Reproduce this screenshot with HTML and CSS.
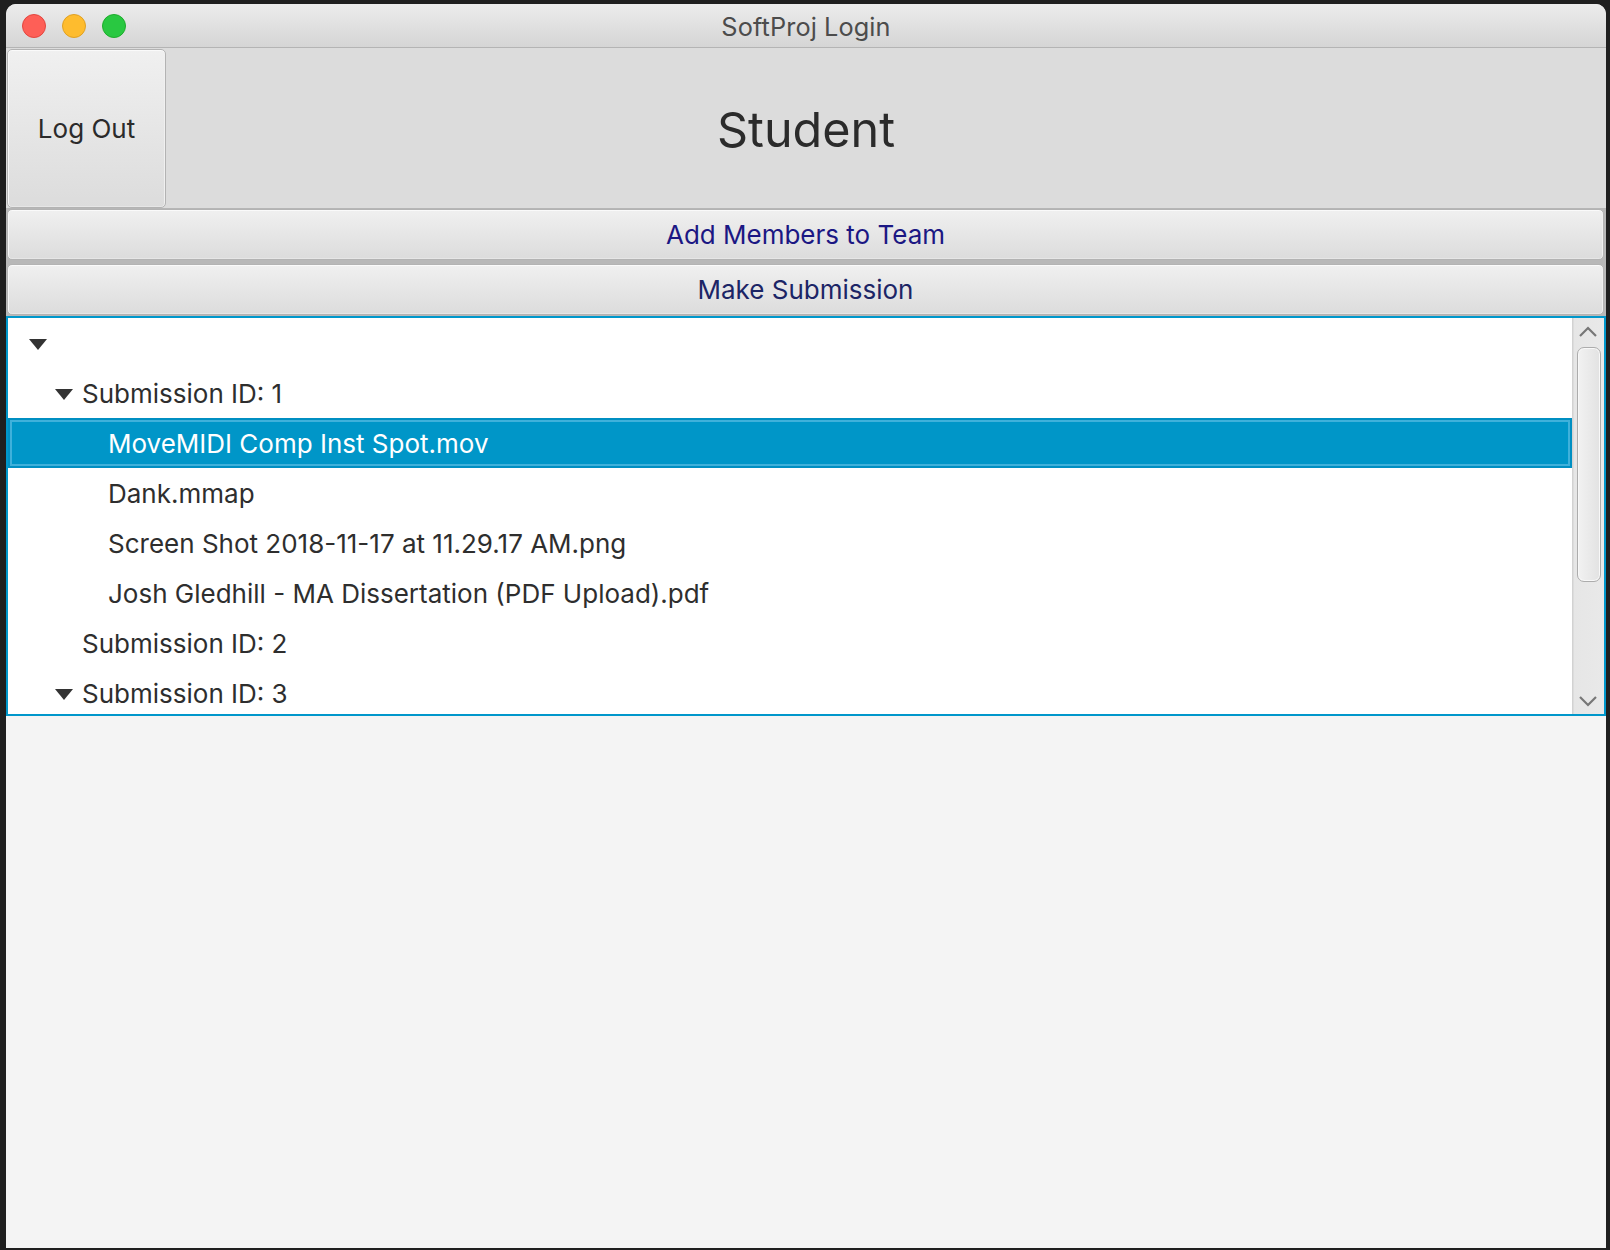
FILE: index.html
```html
<!DOCTYPE html>
<html>
<head>
<meta charset="utf-8">
<link rel="stylesheet" href="styles.css">
</head>
<body>
<div class="window">
  <div class="titlebar">
    <div class="lights">
      <span class="light red"></span>
      <span class="light yellow"></span>
      <span class="light green"></span>
    </div>
    <div class="title">SoftProj Login</div>
  </div>
  <div class="header">
    <button class="btn logout">Log Out</button>
    <div class="role">Student</div>
  </div>
  <div class="actions">
    <button class="btn wide add">Add Members to Team</button>
    <button class="btn wide submit">Make Submission</button>
  </div>
  <div class="tree">
    <div class="rows">
      <div class="row l0"><span class="arrow open"></span><span class="label"></span></div>
      <div class="row l1"><span class="arrow open"></span><span class="label">Submission ID: 1</span></div>
      <div class="row l2 selected"><span class="arrow"></span><span class="label">MoveMIDI Comp Inst Spot.mov</span></div>
      <div class="row l2"><span class="arrow"></span><span class="label">Dank.mmap</span></div>
      <div class="row l2"><span class="arrow"></span><span class="label">Screen Shot 2018-11-17 at 11.29.17 AM.png</span></div>
      <div class="row l2"><span class="arrow"></span><span class="label">Josh Gledhill - MA Dissertation (PDF Upload).pdf</span></div>
      <div class="row l1"><span class="arrow"></span><span class="label">Submission ID: 2</span></div>
      <div class="row l1"><span class="arrow open"></span><span class="label">Submission ID: 3</span></div>
    </div>
    <div class="scrollbar">
      <div class="sb-btn">
        <svg width="20" height="12" viewBox="0 0 20 12"><polyline points="2,10 10,2 18,10" fill="none" stroke="#777" stroke-width="2.2"/></svg>
      </div>
      <div class="sb-track"><div class="thumb"></div></div>
      <div class="sb-btn">
        <svg width="20" height="12" viewBox="0 0 20 12"><polyline points="2,2 10,10 18,2" fill="none" stroke="#777" stroke-width="2.2"/></svg>
      </div>
    </div>
  </div>
  <div class="rest"></div>
</div>
</body>
</html>
```

FILE: styles.css
```css
html, body {
  margin: 0;
  padding: 0;
}
body {
  width: 1610px;
  height: 1250px;
  background: #1f1f1f;
  font-family: Inter, "Open Sans", "Liberation Sans", sans-serif;
  overflow: hidden;
}
.window {
  margin: 4px 0 0 6px;
  width: 1600px;
  height: 1244px;
  display: flex;
  flex-direction: column;
  border-radius: 10px 10px 0 0;
  overflow: hidden;
  background: #f4f4f4;
}
.titlebar {
  height: 43px;
  flex: none;
  background: linear-gradient(#ececec, #d5d5d5);
  border-bottom: 1px solid #b4b4b4;
  display: flex;
  align-items: center;
  justify-content: center;
  position: relative;
}
.lights {
  position: absolute;
  left: 16px;
  top: 10px;
  display: flex;
  gap: 16px;
}
.light {
  width: 22px;
  height: 22px;
  border-radius: 50%;
  border: 1px solid transparent;
}
.red { background: #fe5f57; border-color: #e2463f; }
.yellow { background: #febc2e; border-color: #dfa023; }
.green { background: #29c841; border-color: #1eac2c; }
.title {
  font-size: 25.3px;
  color: #4c4c4c;
  letter-spacing: 0.1px;
  padding-top: 2px;
}
.header {
  height: 160px;
  flex: none;
  background: #dcdcdc;
  display: flex;
  align-items: stretch;
  border-bottom: 1px solid #b6b6b6;
}
.btn {
  font-family: inherit;
  border: 1px solid #b3b3b3;
  border-radius: 5px;
  background: linear-gradient(#f0f0f0, #dcdcdc);
  box-shadow: inset 0 1px 0 #fafafa, inset 1px 0 0 #f6f6f6, inset -1px 0 0 #f0f0f0, inset 0 -1px 0 #e6e6e6;
  margin: 0;
  padding: 0;
  cursor: default;
}
.logout {
  width: 159px;
  margin: 1px 0 0 1px;
  height: 159px;
  font-size: 26px;
  color: #2b2b2b;
}
.role {
  flex: 1;
  display: flex;
  align-items: center;
  justify-content: center;
  font-size: 48.5px;
  color: #2b2b2b;
  padding-right: 160px;
  padding-top: 2px;
}
.actions {
  flex: none;
  display: flex;
  flex-direction: column;
  gap: 4px;
  background: #b8b8b8;
  padding: 0 2px 1px 1px;
}
.wide {
  height: 51px;
  font-size: 26px;
  width: 100%;
}
.add { color: #1b1783; }
.submit { color: #1c2566; height: 51px; }
.tree {
  flex: none;
  height: 396px;
  border: 2px solid #0097cb;
  background: #fff;
  display: flex;
  overflow: hidden;
}
.rows {
  flex: 1;
  display: flex;
  flex-direction: column;
}
.row {
  height: 50px;
  flex: none;
  display: flex;
  align-items: center;
  font-size: 26px;
  color: #2e2e2e;
  box-sizing: border-box;
}
.l0 { padding-left: 21px; }
.l1 { padding-left: 47px; }
.l2 { padding-left: 73px; }
.arrow {
  width: 18px;
  height: 11px;
  margin-right: 9px;
  flex: none;
}
.arrow.open {
  width: 0;
  height: 0;
  border-left: 9px solid transparent;
  border-right: 9px solid transparent;
  border-top: 11px solid #333;
  margin-top: 2px;
}
.selected {
  background: #0096c8;
  color: #fff;
  border: 2px solid #008fc2;
  box-shadow: inset 0 0 0 2px #3fb1db;
}
.selected .label { margin-left: -2px; }
.scrollbar {
  width: 32px;
  flex: none;
  display: flex;
  flex-direction: column;
  background: linear-gradient(90deg, #d2d2d2 0, #d2d2d2 1px, #e6e6e6 2px, #e9e9e9 100%);
}
.sb-btn {
  height: 27px;
  display: flex;
  align-items: center;
  justify-content: center;
  flex: none;
}
.sb-track {
  flex: 1;
  padding: 2px 3px 0 5px;
}
.thumb {
  height: 233px;
  border: 1px solid #acacac;
  border-radius: 7px;
  background: linear-gradient(90deg, #f2f2f2, #e2e2e2);
  box-shadow: inset 0 0 0 1px #f8f8f8;
}
.rest {
  flex: 1;
  background: #f4f4f4;
}
```
